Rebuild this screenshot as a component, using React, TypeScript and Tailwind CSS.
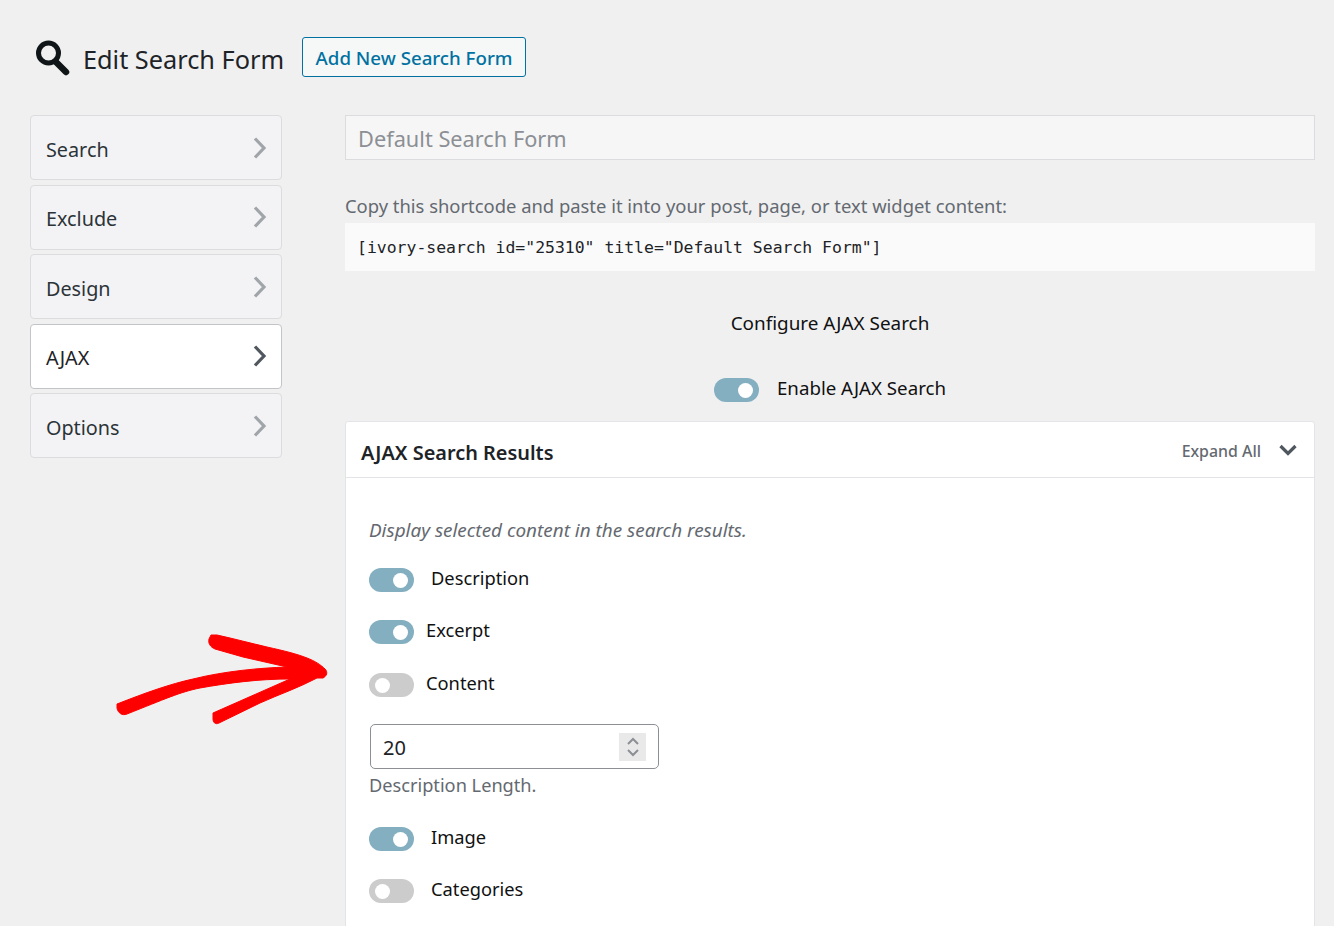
const tabs = ['Search', 'Exclude', 'Design', 'AJAX', 'Options'];

function Chevron({ active }: { active: boolean }) {
  return (
    <svg width="14" height="22" viewBox="0 0 14 22" fill="none" className={active ? 'text-[#50575e]' : 'text-[#a0a5aa]'}>
      <path d="M2 1.5 L11 11 L2 20.5" stroke="currentColor" strokeWidth="3.2" />
    </svg>
  );
}

function Toggle({ on }: { on: boolean }) {
  return (
    <span className={`flex h-6 w-[45px] shrink-0 rounded-full items-center px-[6px] ${on ? 'bg-[#83afc1] justify-end' : 'bg-[#cccccc] justify-start'}`}>
      <span className="h-[15px] w-[15px] rounded-full bg-white" />
    </span>
  );
}

function ToggleRow({ on, label, gap, className }: { on: boolean; label: string; gap: string; className: string }) {
  return (
    <div className={`flex items-center ${gap} ${className}`}>
      <Toggle on={on} />
      <span className="text-[18.3px] leading-6 text-[#111111] relative -top-[2px]">{label}</span>
    </div>
  );
}

export default function App() {
  return (
    <div className="relative h-[926px] overflow-hidden bg-[#f0f0f1] font-['Noto_Sans','Open_Sans',sans-serif] text-[#1d2327]">
      <header className="flex items-start pl-[36px] pt-[37px]">
        <svg width="34" height="36" viewBox="0 0 34 36" fill="none" className="mt-[3px]">
          <circle cx="12.5" cy="13" r="10" stroke="#101517" strokeWidth="5" />
          <path d="M20 22 L30 32" stroke="#101517" strokeWidth="6.5" strokeLinecap="round" />
        </svg>
        <h1 className="ml-[13px] mt-[4px] text-[25.3px] leading-9 font-normal">Edit Search Form</h1>
        <button className="ml-[18px] h-10 w-[224px] rounded-[3px] border border-[#0071a1] bg-[#f6f7f7] pt-[3px] text-[18.7px] font-medium text-[#0071a1]">
          Add New Search Form
        </button>
      </header>

      <div className="mt-[38px] flex items-start pl-[30px]">
        <nav className="flex w-[252px] flex-col gap-[4.5px]">
          {tabs.map((tab) => {
            const active = tab === 'AJAX';
            return (
              <div
                key={tab}
                className={`flex h-[65px] items-center justify-between rounded-[4px] border pl-[15px] pr-[14px] text-[19.8px] ${
                  active ? 'border-[#c3c4c7] bg-white text-[#1d2327]' : 'border-[#dcdcde] bg-[#f3f3f5] text-[#2c3338]'
                }`}
              >
                <span className="relative top-[2px]">{tab}</span>
                <Chevron active={active} />
              </div>
            );
          })}
        </nav>

        <main className="ml-[63px] w-[970px]">
          <div className="flex h-[45px] items-center border border-[#dcdcde] bg-[#f6f6f7] pl-[12px] pt-[4px] text-[21.75px] text-[#8c8f94]">
            Default Search Form
          </div>
          <p className="mt-[32px] text-[18.4px] leading-7 text-[#646970]">
            Copy this shortcode and paste it into your post, page, or text widget content:
          </p>
          <div className="mt-[3px] flex h-12 items-center bg-[#fafafa] pl-[12px] pt-[2px] font-['DejaVu_Sans_Mono',monospace] text-[16.45px] text-[#1d2327]">
            [ivory-search id="25310" title="Default Search Form"]
          </div>
          <p className="mt-[38px] text-center text-[18.9px] leading-7 text-[#111111]">Configure AJAX Search</p>
          <div className="mt-[41px] flex items-center justify-center gap-[18px]">
            <Toggle on />
            <span className="relative -top-[2px] text-[18.7px] leading-6 text-[#111111]">Enable AJAX Search</span>
          </div>

          <section className="mt-[19px] h-[600px] rounded-t-[3px] border border-[#e2e4e7] bg-white">
            <div className="flex h-[56px] items-center justify-between border-b border-[#e2e4e7] pl-[15px] pr-[17px]">
              <h2 className="relative top-[3px] text-[19.9px] font-semibold text-[#1d2327]">AJAX Search Results</h2>
              <div className="flex items-center gap-[18px] text-[#646970]">
                <span className="relative top-[2px] text-[15.9px] font-medium">Expand All</span>
                <svg width="18" height="12" viewBox="0 0 18 12" fill="none" className="relative top-[1px]">
                  <path d="M1.5 2 L9 9.5 L16.5 2" stroke="#50575e" strokeWidth="3.2" />
                </svg>
              </div>
            </div>

            <div className="pl-[23px]">
              <p className="mt-[38px] text-[18.9px] leading-7 italic text-[#646970]">
                Display selected content in the search results.
              </p>
              <ToggleRow on label="Description" gap="gap-[17px]" className="mt-[24px]" />
              <ToggleRow on label="Excerpt" gap="gap-[12px]" className="mt-[28px]" />
              <ToggleRow on={false} label="Content" gap="gap-[12px]" className="mt-[29px]" />

              <div className="ml-px mt-[27px] flex h-[45px] w-[289px] items-center justify-between rounded-[5px] border border-[#8c8f94] bg-white pl-[12px] pr-[12px] text-[20px]">
                <span className="relative top-[1px]">20</span>
                <span className="flex h-7 w-[27px] items-center justify-center bg-[#e9e9ea]">
                  <svg width="14" height="22" viewBox="0 0 14 22" fill="none">
                    <path d="M2 8 L7 3 L12 8 M2 14 L7 19 L12 14" stroke="#8c8f94" strokeWidth="2" />
                  </svg>
                </span>
              </div>
              <p className="mt-[2px] text-[18.2px] leading-7 text-[#646970]">Description Length.</p>

              <ToggleRow on label="Image" gap="gap-[17px]" className="mt-[28px]" />
              <ToggleRow on={false} label="Categories" gap="gap-[17px]" className="mt-[28px]" />
            </div>
          </section>
        </main>
      </div>

      <svg width="240" height="120" viewBox="100 620 240 120" className="absolute left-[100px] top-[620px]">
        <path
          fill="#ff0000"
          stroke="#ff0000"
          strokeWidth="1"
          strokeLinejoin="round"
          d="M211 635 L217 635 C235 639 250 643 267 647 C285 651 297 654 307 658 C315 661 321 665 325 669 C328 672 327 676 323 678 L317 678 C298 688 280 694 260 703 L219 723 C215 725 213 722 213 719 L213 713 L290 679 C258 679 228 683 200 688 C180 692 165 699 127 714 C122 716 118 713 117 708 L117 704 C145 693 170 684 193 679 C225 671 260 668 287 667 L243 657 L215 649 C210 647 208 643 209 639 Z"
        />
      </svg>
    </div>
  );
}
